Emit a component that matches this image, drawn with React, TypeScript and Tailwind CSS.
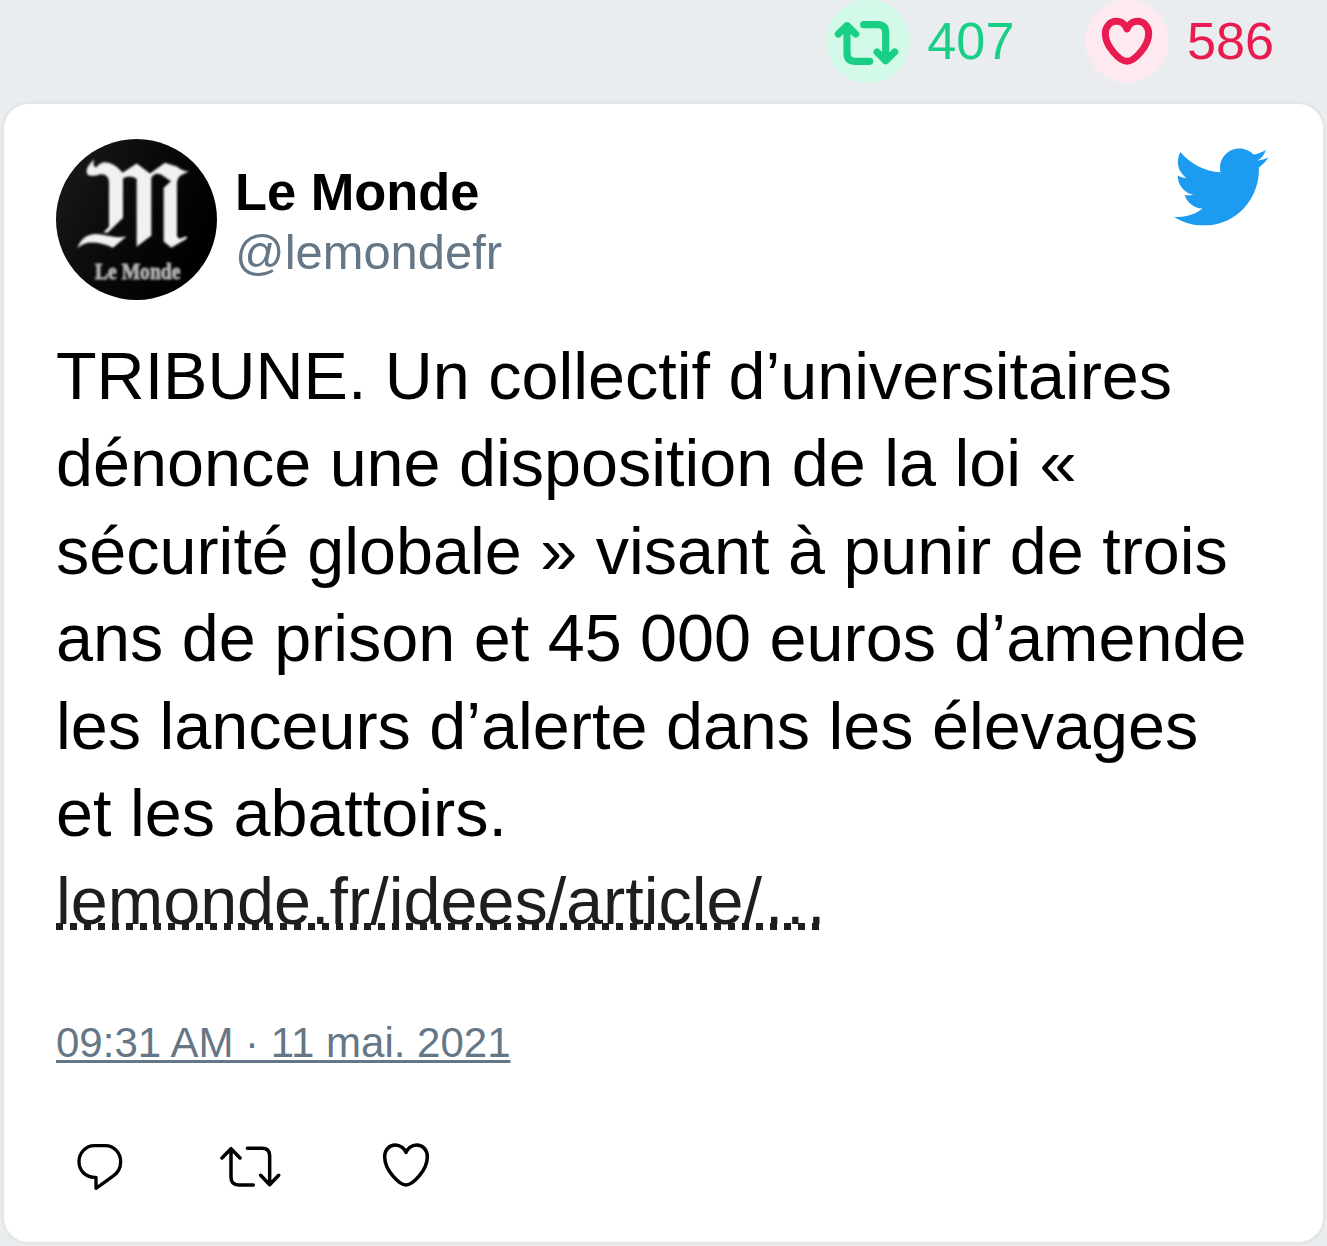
import React from 'react';

const lines = [
  'TRIBUNE. Un collectif d’universitaires',
  'dénonce une disposition de la loi «',
  'sécurité globale » visant à punir de trois',
  'ans de prison et 45 000 euros d’amende',
  'les lanceurs d’alerte dans les élevages',
  'et les abattoirs.',
];

function Avatar() {
  return (
    <svg className="h-[161px] w-[161px] shrink-0 rounded-full" viewBox="48 26.5 483 483">
      <defs>
        <linearGradient id="disc" x1="0" y1="0" x2="1" y2="0.5">
          <stop offset="0" stopColor="#1b1b1b" />
          <stop offset="0.6" stopColor="#080808" />
          <stop offset="1" stopColor="#000" />
        </linearGradient>
        <filter id="soft"><feGaussianBlur stdDeviation="3.8" /></filter>
      </defs>
      <rect x="48" y="26" width="483" height="484" fill="url(#disc)" />
      <g filter="url(#soft)" fill="#f1f1f1">
        <path d="M162 88 C152 98 134 116 142 132 C150 141 168 136 179 133 C196 130 207 140 207 157 V290 L190 307 L203 308 L249 263 V145 Q268 132 290 146 V350 L334 316 V143 Q345 125 364 134 L393 153 L371 173 V334 L394 353 L441 325 L439 318 L419 326 L411 319 V157 Q414 139 426 134 L447 123 Q429 125 412 110 L375 98 L330 130 L290 100 L248 128 Q224 97 194 96 Q177 98 169 112 Q157 111 162 88Z" />
        <path d="M112 354 C124 320 150 306 184 313 C213 319 235 324 259 319 L219 353 C199 343 178 337 153 337 C136 337 124 345 112 354Z" />
        <text x="165" y="448" textLength="256" lengthAdjust="spacingAndGlyphs" className="font-['Liberation_Serif',serif] text-[68px] font-bold" fill="#b4b4b4" stroke="#b4b4b4" strokeWidth="3">Le Monde</text>
      </g>
    </svg>
  );
}

function Bird() {
  return (
    <svg className="mt-[-2px] mr-px h-[100px] w-[100px]" viewBox="0 0 24 24" fill="#1d9bf0">
      <path d="M23.643 4.937c-.835.37-1.732.62-2.675.733.962-.576 1.7-1.49 2.048-2.578-.9.534-1.897.922-2.958 1.13-.85-.904-2.06-1.47-3.4-1.47-2.572 0-4.658 2.086-4.658 4.66 0 .364.042.718.12 1.06-3.873-.195-7.304-2.05-9.602-4.868-.4.69-.63 1.49-.63 2.342 0 1.616.823 3.043 2.072 3.878-.764-.025-1.482-.234-2.11-.583v.06c0 2.257 1.605 4.14 3.737 4.568-.392.106-.803.162-1.227.162-.3 0-.593-.028-.877-.082.593 1.85 2.313 3.198 4.352 3.234-1.595 1.25-3.604 1.995-5.786 1.995-.376 0-.747-.022-1.112-.065 2.062 1.323 4.51 2.093 7.14 2.093 8.57 0 13.255-7.098 13.255-13.254 0-.2-.005-.402-.014-.602.91-.658 1.7-1.477 2.323-2.41z" />
    </svg>
  );
}

export default function App() {
  return (
    <div className="flex h-[1246px] w-[1327px] flex-col overflow-hidden bg-[#e9edf0] font-['Liberation_Sans',Arial,sans-serif]">
      <div className="flex h-[101px] shrink-0 items-start justify-end pr-[53px] text-[52.2px] leading-[83px]">
        <div className="flex text-[#19cf86]">
          <svg className="mr-[17px] h-[84px] w-[84px]" viewBox="18 0 252 252" fill="none" stroke="currentColor" strokeWidth="21.5" strokeLinecap="round" strokeLinejoin="round">
            <circle cx="144" cy="124" r="125.5" fill="#d3f9e9" stroke="none" />
            <path d="M55 102 L81 77 L107 102 M81 77 V160 Q81 184 105 184 H149 M131 74 H173 Q197 74 197 98 V182 M171 156 L197 182 L224 156" />
          </svg>
          407
        </div>
        <div className="ml-[70.5px] flex text-[#e91c51]">
          <svg className="mr-[18px] h-[84px] w-[84px]" viewBox="45 0 252 252" fill="none" stroke="currentColor" strokeWidth="21" strokeLinejoin="round">
            <circle cx="171" cy="124" r="125.5" fill="#fdeaf1" stroke="none" />
            <path d="M171 184 C149 184 106 138 106 101 C106 79 121 64 139 64 C156 64 167 76 171 87 C175 76 186 64 203 64 C221 64 236 79 236 101 C236 138 193 184 171 184Z" />
          </svg>
          586
        </div>
      </div>

      <article className="ml-px flex h-[1144px] w-[1325px] shrink-0 flex-col rounded-[28px] border-[3px] border-[#e6e6e6] bg-white px-[52px] pt-[35px]">
        <header className="flex h-[161px] items-start">
          <Avatar />
          <div className="ml-[18px] flex grow flex-col pt-[22px]">
            <span className="text-[52.4px] leading-[62px] font-bold text-black">Le Monde</span>
            <span className="text-[48.9px] leading-[58px] text-[#657786]">@lemondefr</span>
          </div>
          <Bird />
        </header>

        <div className="mt-[33px] text-[66.5px] leading-[87.45px] text-black">
          {lines.map((line) => (
            <p key={line} className="whitespace-nowrap">{line}</p>
          ))}
          <a className="block w-[767px] bg-[repeating-linear-gradient(90deg,#1e1e1e_0_7px,transparent_7px_14px)] bg-[length:764px_7px] bg-[position:0_65px] bg-no-repeat whitespace-nowrap text-[#1e1e1e]">lemonde.fr/idees/article/…</a>
        </div>

        <time className="mt-[68.8px] text-[42px] leading-[58px] text-[#657786] underline decoration-[3px] underline-offset-[3px]">09:31 AM · 11 mai. 2021</time>

        <footer className="mt-[67px] flex items-start text-black">
          <svg className="ml-[17px] h-[56px] w-[54px]" viewBox="39 27 162 168" fill="none" stroke="currentColor" strokeWidth="10" strokeLinejoin="round">
            <path d="M103 47 H136 C162 47 182 69 182 95 C182 113 173 129 158 139 L108 175 V142 H103 C77 142 57 121 57 95 C57 69 77 47 103 47Z" />
          </svg>
          <svg className="ml-[90px] h-[56px] w-[68px]" viewBox="471 27 204 168" fill="none" stroke="currentColor" strokeWidth="10.5" strokeLinecap="round" strokeLinejoin="round">
            <path d="M486 84 L513 56 L540 84 M513 56 V142 Q513 165 536 165 H580 M562 55 H606 Q629 55 629 78 V164 M602 136 L629 164 L656 136" />
          </svg>
          <svg className="ml-[91px] h-[56px] w-[60px]" viewBox="48 27 180 168" fill="none" stroke="currentColor" strokeWidth="10.5" strokeLinejoin="round">
            <path d="M138 165 C118 165 74 121 74 80 C74 59 88 45 106 45 C122 45 134 56 138 67 C142 56 154 45 170 45 C188 45 202 59 202 80 C202 121 158 165 138 165Z" />
          </svg>
        </footer>
      </article>
    </div>
  );
}
